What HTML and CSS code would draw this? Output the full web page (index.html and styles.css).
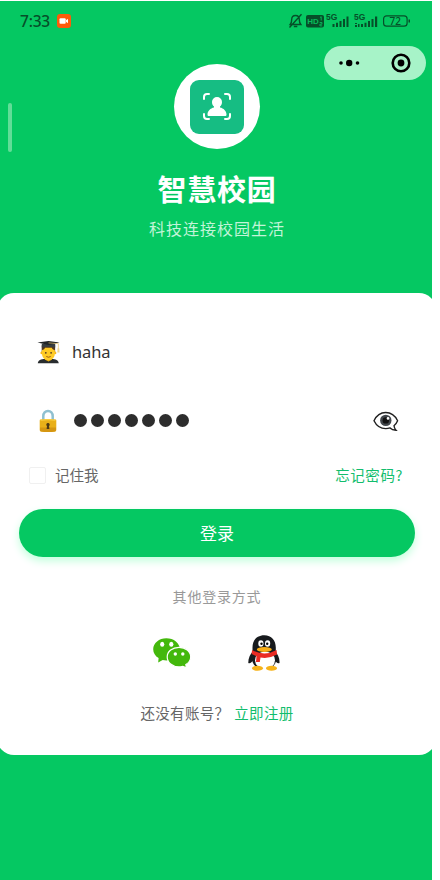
FILE: index.html
```html
<!DOCTYPE html>
<html lang="zh-CN">
<head>
<meta charset="utf-8">
<title>智慧校园</title>
<link rel="stylesheet" href="styles.css">
</head>
<body>
<div class="phone">
  <header class="status">
    <span class="time">7:33</span>
    <svg class="rec" viewBox="0 0 14 14"><rect width="14" height="14" rx="3" fill="#ff5a0a"/><rect x="2.5" y="4.2" width="6.2" height="5.6" rx="1" fill="#fff"/><path d="M9 6.2l2-1.4v4.4L9 7.8z" fill="#fff"/></svg>
    <svg class="signals" viewBox="0 -4 124 24" fill="none" stroke="#064f29">
      <g stroke-width="1.4"><path d="M2.2 11.500h10.600c-1.300-1.600-1.500-2.500-1.500-5 0-2.400-1.500-4-3.800-4S3.700 4.100 3.700 6.500c0 2.500-.2 3.400-1.500 5zM5.800 13.500h3.500M13.500 1.200L1.500 14.500"/></g>
      <rect x="18" y="2" width="18" height="12.500" rx="2" fill="#064f29" stroke="none"/>
      <g fill="#064f29" stroke="none">
        <text class="five" x="38" y="7.300">5G</text><text class="five" x="66" y="7.300">5G</text>
        <path d="M44.500 11h2v3h-2zM48 9.800h2V14h-2zM51.500 8h2v6h-2zM55 6h2v8h-2zM58.500 3.500h2V14h-2z"/>
        <path d="M67 10h2v1h-2zm0 2h2v2h-2zM70 11h1.500v3H70zM73 11h2v3h-2zM76.500 9.800h2V14h-2zM80 8h2v6h-2zM83.500 6h2v8h-2zM87 3.500h2.200V14H87z"/>
        <text class="batt" x="101.500" y="11.600">72</text>
        <path d="M120.500 6.500h1.500v3h-1.500z"/>
      </g>
      <rect x="95.600" y="2.800" width="23.500" height="10.400" rx="3" stroke-width="1.200"/>
      <g fill="#08bd5c" stroke="none"><text class="hd" x="19.300" y="11.200">HD</text></g>
      <path d="M32 4.500l1.200-.8v3.800M31.700 9.500h2.200v1.700h-2v1.700h2.300" stroke="#08bd5c" stroke-width=".9"/>
    </svg>
  </header>
  <div class="capsule">
    <svg viewBox="0 0 102 34"><circle cx="17" cy="17" r="1.800"/><circle cx="25.200" cy="17" r="3.200"/><circle cx="33.500" cy="17" r="1.800"/><circle cx="77" cy="17" r="8.300" fill="none" stroke="#000" stroke-width="2.600"/><circle cx="77" cy="17" r="3.400"/></svg>
  </div>
  <i class="scroll-mark"></i>
  <section class="brand">
    <div class="logo">
      <svg viewBox="0 0 54 54"><rect width="54" height="54" rx="9" fill="#16bd83"/><g fill="none" stroke="#fff" stroke-width="2" stroke-linecap="round"><path d="M14 19v-2q0-3 3-3h2M35 14h2q3 0 3 3v2M40 34v2q0 3-3 3h-2M19 39h-2q-3 0-3-3v-2"/></g><path d="M27 17a5 5 0 0 1 5 5c0 2-.8 3.500-2 4.500v1c3.500.7 6.500 3.500 6.500 7 0 1-.5 1.500-1.500 1.500H19c-1 0-1.500-.5-1.500-1.500 0-3.500 3-6.300 6.500-7v-1c-1.200-1-2-2.500-2-4.500a5 5 0 0 1 5-5z" fill="#fff"/></svg>
    </div>
    <h1>智慧校园</h1>
    <p>科技连接校园生活</p>
  </section>
  <main class="card">
    <div class="field">
      <svg class="student" viewBox="0 0 24 24">
        <path d="M.8 23.700c.4-3.200 3.200-4.200 7.700-4.700h6.500c4.500.5 7.300 1.500 7.700 4.700z" fill="#282c2e"/>
        <path d="M8.500 18h7v2l-3.500 2-3.500-2z" fill="#e6ac10"/>
        <path d="M4.900 5h14v7h-14z" fill="#55391f"/>
        <circle cx="5" cy="13" r="1.400" fill="#f5b51b"/><circle cx="18.800" cy="13" r="1.400" fill="#f5b51b"/>
        <path d="M5.200 10c1.800-.3 2.800-1.500 3.200-2.500h7c.4 1 1.400 2.200 3.200 2.500v3.500c0 4.200-2.900 7-6.700 7s-6.700-2.800-6.700-7z" fill="#ffcb24"/>
        <path d="M5 3.500h14v3.700c-4-1-10-1-14 0z" fill="#373d40"/><path d="M.5 2.200L12 .5l11.500 1.700L12 4.800z" fill="#202426"/>
        <path d="M12 2.500l10.300.8v7" fill="none" stroke="#e8c56a" stroke-width=".7"/><path d="M21.500 8h1.700l.3 4.500h-2.300z" fill="#efd58d"/>
        <circle cx="9.200" cy="12.800" r=".9" fill="#4c3322"/><circle cx="14.700" cy="12.800" r=".9" fill="#4c3322"/><path d="M9.700 16.700q2.300 1.500 4.600 0" fill="none" stroke="#8c4c12" stroke-width=".9"/>
      </svg>
      <span class="name">haha</span>
    </div>
    <div class="field secret">
      <svg class="lock" viewBox="0 0 18 24"><path d="M4.300 12V7.200C4.300 4 6.300 2 9 2s4.700 2 4.700 5.200V12" fill="none" stroke="#8fc0d0" stroke-width="2.500"/><path d="M1.500 10.500q7.500-1.200 15 0 .8 0 .8 1V21q0 1.300-1.200 1.500-7 1-14.200 0Q.7 22.300.7 21v-9.500q0-1 .8-1z" fill="#e9b019"/><path d="M1 18.500h16V21q0 1.300-1 1.400-7 1-14 0Q1 22.300 1 21z" fill="#d59612"/><path d="M1.500 11.200q7.500-1 15 0" fill="none" stroke="#ffd64a"/><path d="M9 14a1.700 1.700 0 0 0-1 3.100l-.4 3h2.800l-.4-3A1.700 1.700 0 0 0 9 14z" fill="#4c3815"/></svg>
      <span class="dots"><i></i><i></i><i></i><i></i><i></i><i></i><i></i></span>
      <svg class="eye" viewBox="0 0 26 22"><path d="M1 9.700C3.500 4.500 7.500 1.500 12.700 1.500S22 4.500 24.600 9.700c-1 2.300-2.100 3.900-3.600 5.100.2 1.900.8 3.200 2 4.400-2.700-.1-4.600-.9-6-2.300-1.400.5-2.800.7-4.300.7C7.500 17.600 3.500 14.800 1 9.700z" fill="#fff" stroke="#202020" stroke-width="1.400"/><circle cx="12.800" cy="9.400" r="5.700" fill="#41464b"/><circle cx="12.800" cy="9.400" r="3.200" fill="#111"/><circle cx="15" cy="7.400" r="1.300" fill="#fff"/></svg>
    </div>
    <div class="options"><span class="box"></span><span>记住我</span><a class="forgot">忘记密码?</a></div>
    <button class="login">登录</button>
    <p class="others">其他登录方式</p>
    <div class="social">
      <svg class="wechat" viewBox="0 0 38 30"><path d="M13.300.2C6.200.2.200 5 .2 11.200c0 3.700 2.100 6.900 5.400 8.900l-.4 4.300 4.500-2.400c6 1.500 17.200-.8 17.300-10.300C27 5 20.700.2 13.300.2z" fill="#43b80c"/><path d="M26 9.300c-6.600 0-11.800 4.200-11.800 9.700s5.200 9.900 11.800 9.900c1.300 0 2.600-.2 3.800-.6l3.700 1.600-.7-3.300c3-1.700 4.900-4.500 4.900-7.600 0-5.500-5.100-9.700-11.700-9.700z" fill="#43b80c" stroke="#fff" stroke-width="1.200"/><g fill="#fff"><ellipse cx="9.200" cy="6.300" rx="2.100" ry="2.500"/><ellipse cx="18.300" cy="6.300" rx="2.100" ry="2.500"/><circle cx="22.300" cy="16" r="1.700"/><circle cx="29.800" cy="16" r="1.700"/></g></svg>
      <svg class="qq" viewBox="0 0 32 36"><path d="M6 15C2 19 .2 23 .3 28c1.700.8 3.500-.5 5-3M26 15c4 4 5.800 8 5.500 13-1.700.8-3.500-.5-5-3" fill="#171a1d"/><path d="M16.300.3C8.800.3 4.500 5.500 4.500 12.500v5C2.500 23 3.500 34 16.300 34S29.500 23 27.800 17.500v-5C27.800 5.500 23.500.3 16.300.3z" fill="#171a1d"/><ellipse cx="17" cy="25.300" rx="10" ry="8.900" fill="#fff"/><ellipse cx="9.500" cy="33.200" rx="5.500" ry="2.500" fill="#f6b31a"/><ellipse cx="23.500" cy="33.200" rx="5.500" ry="2.500" fill="#f6b31a"/><ellipse cx="12.900" cy="8.500" rx="2.600" ry="3.300" fill="#fff"/><ellipse cx="19.600" cy="8.500" rx="2.600" ry="3.300" fill="#fff"/><circle cx="13.500" cy="8.800" r="1.200"/><circle cx="19.200" cy="8.800" r="1.200"/><path d="M4 15q12.300 7 24.600 0l.4 4.500q-8 4.500-16.500 3l-.7 4.500H8l.5-5.700L3.700 19z" fill="#ea2b24"/><ellipse cx="16.300" cy="14.600" rx="7.500" ry="2.500" fill="#f9af17"/></svg>
    </div>
    <p class="register">还没有账号？<a>立即注册</a></p>
  </main>
</div>
</body>
</html>
```

FILE: styles.css
```css
* { box-sizing: border-box; }
body { margin: 0; padding-top: 1px; background: #fff; overflow: hidden; font-family: "Noto Sans", "Noto Sans CJK SC", sans-serif; }
h1, p { margin: 0; }
svg { display: block; flex: none; }
.phone { position: relative; width: 432px; height: 879px; overflow: hidden; background: #05c862; }
.status { display: flex; align-items: center; height: 40px; padding-left: 20px; }
.time { width: 36px; font: 500 15.5px/20px "Noto Sans", sans-serif; letter-spacing: -.2px; color: #064f29; }
.rec { width: 14px; height: 14px; margin-left: 1px; }
.signals { width: 124px; height: 24px; margin-left: 217px; }
.five { font: 700 8.500px "Liberation Sans", sans-serif; }
.batt { font: 500 10px "Noto Sans", sans-serif; }
.hd { font: 700 8px "Liberation Sans", sans-serif; }
.capsule { position: absolute; right: 6px; top: 45px; width: 102px; height: 34px; border-radius: 17px; background: #a7f3c8; }
.scroll-mark { position: absolute; left: 8px; top: 102px; width: 4px; height: 49px; border-radius: 2px; background: #62dd98; }
.brand { display: flex; flex-direction: column; align-items: center; height: 252px; padding: 23px 0 0 2px; color: #fff; }
.logo { display: flex; align-items: center; justify-content: center; width: 86px; height: 85px; border-radius: 50%; background: #fff; }
.logo svg { width: 54px; height: 54px; }
.brand h1 { margin-top: 19px; font: 700 29px/40px "Noto Sans CJK SC", sans-serif; letter-spacing: .7px; }
.brand p { margin-top: 8px; font: 400 16px/24px "Noto Sans CJK SC", sans-serif; letter-spacing: 1px; color: #c2f4d8; }
.card { height: 462px; margin: 0 -4px 0 -3px; padding: 25px 21px 0 22px; border-radius: 17px; background: #fff; }
.field { display: flex; align-items: center; height: 68px; padding: 0 16px 0 18px; }
.student { width: 23px; height: 24px; }
.name { margin-left: 12px; font: 400 16.500px/24px "Noto Sans", sans-serif; letter-spacing: -.1px; color: #333; }
.lock { width: 18px; height: 24px; margin: 2px 0 0 2px; }
.dots { display: flex; gap: 4px; margin-left: 17px; }
.dots i { width: 13px; height: 13px; border-radius: 50%; background: #2d2d2d; }
.eye { width: 26px; height: 22px; margin: 3px 0 0 auto; }
.options { display: flex; align-items: center; height: 42px; padding: 0 12px 0 10px; font: 400 14.500px/22px "Noto Sans CJK SC", sans-serif; color: #666; }
.box { width: 17px; height: 17px; margin-right: 9px; border: 1px solid #f0f0f0; border-radius: 2px; }
.forgot { margin-left: auto; letter-spacing: .6px; color: #12bd6d; }
.login { display: block; width: 396px; height: 48px; margin-top: 13px; padding: 0 0 1px; border: 0; border-radius: 24px; background: #05c862; box-shadow: 0 4px 9px #c1ffdc; color: #fff; font: 400 17px/47px "Noto Sans CJK SC", sans-serif; }
.others { margin-top: 28px; text-align: center; font: 400 14px/22px "Noto Sans CJK SC", sans-serif; letter-spacing: .8px; color: #999; }
.social { display: flex; justify-content: center; align-items: center; gap: 57px; height: 36px; margin-top: 28px; padding-right: 2px; }
.wechat { width: 38px; height: 30px; }
.qq { width: 32px; height: 36px; }
.register { margin-top: 31px; text-align: center; font: 400 14.500px/22px "Noto Sans CJK SC", sans-serif; letter-spacing: .3px; color: #666; }
.register a { margin-left: 5px; color: #12bd6d; }
```
